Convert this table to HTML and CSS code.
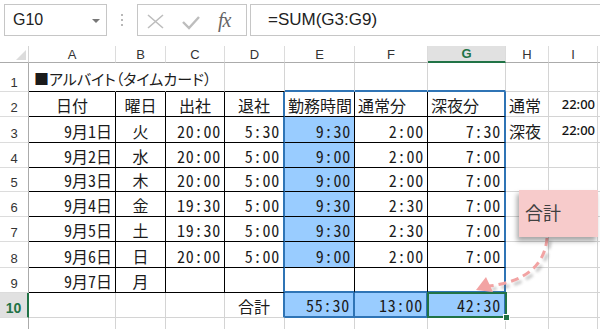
FILE: index.html
```html
<!DOCTYPE html>
<html lang="ja">
<head>
<meta charset="utf-8">
<title>アルバイト（タイムカード）</title>
<link rel="stylesheet" href="styles.css">
</head>
<body>
<div class="app">
  <div class="toolbar">
    <div class="namebox"><span>G10</span><svg class="caret" width="8" height="4" viewBox="0 0 8 4"><polygon points="0,0 8,0 4,4" fill="#777"/></svg></div>
    <div class="dots"><svg width="4" height="14" viewBox="0 0 4 14"><circle cx="2" cy="2" r="1" fill="#a0a0a0"/><circle cx="2" cy="7" r="1" fill="#a0a0a0"/><circle cx="2" cy="12" r="1" fill="#a0a0a0"/></svg></div>
    <div class="fbtns">
      <svg class="ficons" width="75" height="30" viewBox="0 0 75 30">
        <path d="M10 10 L25 23 M25 10 L10 23" stroke="#bdbdbd" stroke-width="1.6" fill="none"/>
        <path d="M45 17 L51 23 L61 12" stroke="#bdbdbd" stroke-width="2.4" fill="none"/>
      </svg>
      <span class="fx">fx</span>
    </div>
    <div class="finput">=SUM(G3:G9)</div>
  </div>

  <div class="sheet">
    <!-- header -->
    <div class="corner"><svg width="10" height="10" viewBox="0 0 10 10"><polygon points="10,0 10,10 0,10" fill="#dcdcdc"/></svg></div>
    <div class="ch">A</div><div class="ch">B</div><div class="ch">C</div><div class="ch">D</div><div class="ch">E</div><div class="ch">F</div><div class="ch sel">G</div><div class="ch">H</div><div class="ch">I</div><div class="ch"></div>

    <!-- row 1 -->
    <div class="rh">1</div>
    <div class="c kb nr t1">■アルバイト（タイムカード）</div>
    <div class="c kb nr"></div><div class="c kb"></div><div class="c kb"></div>
    <div class="c bb2"></div><div class="c bb2"></div><div class="c bb2"></div>
    <div class="c"></div><div class="c"></div><div class="c"></div>

    <!-- row 2 -->
    <div class="rh">2</div>
    <div class="c k ctr">日付</div>
    <div class="c k ctr">曜日</div>
    <div class="c k ctr">出社</div>
    <div class="c kb br2 ctr">退社</div>
    <div class="c k">勤務時間</div>
    <div class="c k">通常分</div>
    <div class="c kb br2">深夜分</div>
    <div class="c">通常</div>
    <div class="c r s">22:00</div>
    <div class="c"></div>

    <!-- row 3 -->
    <div class="rh">3</div>
    <div class="c k r">9月1日</div>
    <div class="c k ctr">火</div>
    <div class="c k r n">20:00</div>
    <div class="c kb br2 r n">5:30</div>
    <div class="c k r n fill">9:30</div>
    <div class="c k r n">2:00</div>
    <div class="c kb br2 r n">7:30</div>
    <div class="c">深夜</div>
    <div class="c r s">22:00</div>
    <div class="c"></div>

    <!-- row 4 -->
    <div class="rh">4</div>
    <div class="c k r">9月2日</div>
    <div class="c k ctr">水</div>
    <div class="c k r n">20:00</div>
    <div class="c kb br2 r n">5:00</div>
    <div class="c k r n fill">9:00</div>
    <div class="c k r n">2:00</div>
    <div class="c kb br2 r n">7:00</div>
    <div class="c"></div><div class="c"></div><div class="c"></div>

    <!-- row 5 -->
    <div class="rh">5</div>
    <div class="c k r">9月3日</div>
    <div class="c k ctr">木</div>
    <div class="c k r n">20:00</div>
    <div class="c kb br2 r n">5:00</div>
    <div class="c k r n fill">9:00</div>
    <div class="c k r n">2:00</div>
    <div class="c kb br2 r n">7:00</div>
    <div class="c"></div><div class="c"></div><div class="c"></div>

    <!-- row 6 -->
    <div class="rh">6</div>
    <div class="c k r">9月4日</div>
    <div class="c k ctr">金</div>
    <div class="c k r n">19:30</div>
    <div class="c kb br2 r n">5:00</div>
    <div class="c k r n fill">9:30</div>
    <div class="c k r n">2:30</div>
    <div class="c kb br2 r n">7:00</div>
    <div class="c"></div><div class="c"></div><div class="c"></div>

    <!-- row 7 -->
    <div class="rh">7</div>
    <div class="c k r">9月5日</div>
    <div class="c k ctr">土</div>
    <div class="c k r n">19:30</div>
    <div class="c kb br2 r n">5:00</div>
    <div class="c k r n fill">9:30</div>
    <div class="c k r n">2:30</div>
    <div class="c kb br2 r n">7:00</div>
    <div class="c"></div><div class="c"></div><div class="c"></div>

    <!-- row 8 -->
    <div class="rh">8</div>
    <div class="c k r">9月6日</div>
    <div class="c k ctr">日</div>
    <div class="c k r n">20:00</div>
    <div class="c kb br2 r n">5:00</div>
    <div class="c k r n fill">9:00</div>
    <div class="c k r n">2:00</div>
    <div class="c kb br2 r n">7:00</div>
    <div class="c"></div><div class="c"></div><div class="c"></div>

    <!-- row 9 -->
    <div class="rh">9</div>
    <div class="c k r">9月7日</div>
    <div class="c k ctr">月</div>
    <div class="c k"></div>
    <div class="c kb br2"></div>
    <div class="c k bb2"></div>
    <div class="c k bb2"></div>
    <div class="c br2 bb2"></div>
    <div class="c"></div><div class="c"></div><div class="c"></div>

    <!-- row 10 -->
    <div class="rh rsel">10</div>
    <div class="c"></div><div class="c"></div><div class="c"></div>
    <div class="c br2 ctr">合計</div>
    <div class="c br2 bb2 r n fill">55:30</div>
    <div class="c br2 bb2 r n fill">13:00</div>
    <div class="c br2 bb2 r n fill act">42:30</div>
    <div class="c"></div><div class="c"></div><div class="c"></div>

    <!-- row 11 -->
    <div class="rh">11</div>
    <div class="c"></div><div class="c"></div><div class="c"></div><div class="c"></div><div class="c"></div>
    <div class="c"></div><div class="c"></div><div class="c"></div><div class="c"></div><div class="c"></div>
  </div>

  <svg class="arrow" width="600" height="329" viewBox="0 0 600 329">
    <defs>
      <filter id="blur" x="-20%" y="-20%" width="140%" height="140%"><feGaussianBlur stdDeviation="1.6"/></filter>
    </defs>
    <g filter="url(#blur)" opacity="0.45">
      <path d="M550 241 C548 268 528 285 492 289" stroke="#777" stroke-width="3" fill="none" stroke-dasharray="8 5"/>
    </g>
    <path d="M547 238 C545 265 525 282 489 286" stroke="#f2a3a3" stroke-width="3" fill="none" stroke-dasharray="8 5"/>
    <polygon points="476,290 486,277 493,292" fill="#f2a3a3"/>
  </svg>
  <div class="callout">合計</div>
</div>
</body>
</html>
```

FILE: styles.css
```css
html, body {
  margin: 0;
  padding: 0;
  width: 600px;
  height: 329px;
  overflow: hidden;
  background: #fff;
}

.app {
  position: relative;
  width: 600px;
  height: 329px;
  overflow: hidden;
}

/* ---------- toolbar ---------- */
.toolbar {
  display: flex;
  height: 32px;
  padding: 4px 0 0 4px;
  margin-bottom: 10px;
  font-family: "Liberation Sans", Arial, sans-serif;
  color: #222;
}

.namebox {
  width: 103px;
  box-sizing: border-box;
  border: 1px solid #c6c6c6;
  display: flex;
  align-items: center;
  justify-content: space-between;
  padding: 0 6px 0 8px;
  font-size: 16px;
}

.caret {
  margin-top: 1px;
}

.dots {
  width: 30px;
  display: flex;
  align-items: center;
  justify-content: center;
}

.fbtns {
  width: 110px;
  box-sizing: border-box;
  border: 1px solid #c6c6c6;
  display: flex;
  align-items: center;
}

.ficons {
  display: block;
}

.fx {
  margin-left: 5px;
  font-family: "Liberation Serif", "DejaVu Serif", serif;
  font-style: italic;
  font-size: 20px;
  color: #666;
  letter-spacing: -1px;
  line-height: 1;
  margin-top: -1px;
}

.finput {
  flex: 1;
  border: 1px solid #c6c6c6;
  border-right: none;
  margin-left: 3px;
  display: flex;
  align-items: center;
  padding-left: 17px;
  font-size: 17px;
}

/* ---------- sheet ---------- */
.sheet {
  display: grid;
  grid-template-columns: 29px 87px 50px 59px 60px 70px 73px 78px 43px 49px 1fr;
  grid-template-rows: 17px 29px 25px 26px 25px 24px 25px 25px 26px 25px 25px 25px;
  font-family: "Noto Sans Mono CJK JP", "Noto Sans CJK JP", sans-serif;
  font-size: 16px;
  color: #1b1b1b;
}

.corner {
  box-sizing: border-box;
  border-right: 1px solid #d4d4d4;
  border-bottom: 1px solid #ababab;
  display: flex;
  align-items: flex-end;
  justify-content: flex-end;
  padding: 0 2px 2px 0;
}

.corner svg {
  display: block;
}

.ch {
  box-sizing: border-box;
  border-right: 1px solid #dcdcdc;
  border-bottom: 1px solid #ababab;
  display: flex;
  align-items: center;
  justify-content: center;
  font-family: "Liberation Sans", Arial, sans-serif;
  font-size: 13px;
  color: #333;
}

.ch.sel {
  background: #e1e1e1;
  border-bottom: 2px solid #217346;
  color: #217346;
  font-weight: bold;
}

.rh {
  box-sizing: border-box;
  border-right: 1px solid #ababab;
  border-bottom: 1px solid #dcdcdc;
  display: flex;
  align-items: flex-end;
  justify-content: center;
  font-family: "Liberation Sans", Arial, sans-serif;
  font-size: 13px;
  line-height: 15px;
  padding-bottom: 1px;
  color: #333;
}

.rh.rsel {
  background: #e1e1e1;
  border-right: 2px solid #217346;
  color: #217346;
  font-weight: bold;
  font-size: 14px;
}

.c {
  box-sizing: border-box;
  border-right: 1px solid #d4d4d4;
  border-bottom: 1px solid #d4d4d4;
  display: flex;
  align-items: flex-end;
  justify-content: flex-start;
  padding: 0 3px 1px 3px;
  line-height: 20px;
  white-space: nowrap;
  overflow: hidden;
  min-width: 0;
}

.c.r { justify-content: flex-end; }
.c.ctr { justify-content: center; }

.c.n { letter-spacing: 0.8px; }

.c.s {
  font-family: "Noto Sans", "Liberation Sans", sans-serif;
  font-size: 13px;
  font-weight: 500;
  color: #111;
  padding-bottom: 2px;
  padding-right: 2px;
}

.c.t1 {
  overflow: visible;
  font-family: "Noto Sans CJK JP", sans-serif;
  font-size: 15px;
  font-feature-settings: "palt";
  padding-left: 5px;
  padding-bottom: 2px;
  position: relative;
  z-index: 1;
}

.c.fill { background: #99ccff; }

/* borders */
.c.k { border-right-color: #000; border-bottom-color: #000; }
.c.kb { border-bottom-color: #000; }
.c.nr { border-right-color: transparent; }
.c.br2 { border-right: 2px solid #2f74b5; }
.c.bb2 { border-bottom: 2px solid #2f74b5; }

/* active cell */
.c.act {
  position: relative;
  overflow: visible;
  z-index: 2;
}

.c.act::before {
  content: "";
  position: absolute;
  left: -1px;
  top: -1px;
  right: -3px;
  bottom: -2px;
  border: 2px solid #217346;
}

.c.act::after {
  content: "";
  position: absolute;
  right: -6px;
  bottom: -5px;
  width: 5px;
  height: 5px;
  background: #217346;
  border: 1px solid #fff;
}

/* ---------- callout ---------- */
.arrow {
  position: absolute;
  left: 0;
  top: 0;
  pointer-events: none;
  z-index: 3;
}

.callout {
  position: absolute;
  left: 519px;
  top: 190px;
  width: 79px;
  height: 47px;
  box-sizing: border-box;
  background: #f7cbcb;
  box-shadow: -2px 4px 5px rgba(0, 0, 0, 0.35);
  padding: 11px 0 0 6px;
  font-family: "Noto Sans CJK JP", sans-serif;
  font-size: 18px;
  line-height: 22px;
  color: #404040;
  z-index: 4;
}
```
